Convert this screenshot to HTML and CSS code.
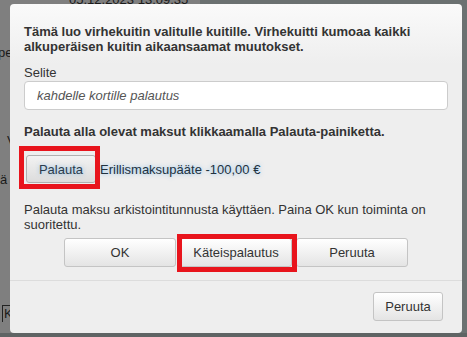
FILE: index.html
```html
<!DOCTYPE html>
<html>
<head>
    <title>Virhekuitti</title>
    <link rel="stylesheet" href="styles.css">
</head>
<body>
    <div class="backdrop">
        <div class="bg-left">
            <div class="bg-date">05.12.2023 13:09:35</div>
            <div class="bg-frag frag-pe">pe</div>
            <div class="bg-frag frag-v">V</div>
            <div class="bg-frag frag-a">ä</div>
            <div class="bg-cell">K</div>
        </div>
        <div class="bg-right"></div>
    </div>

    <div class="modal">
        <div class="modal-body">
            <p class="lead">Tämä luo virhekuitin valitulle kuitille. Virhekuitti kumoaa kaikki alkuperäisen kuitin aikaansaamat muutokset.</p>

            <label for="selite" class="field-label">Selite</label>
            <input type="text" id="selite" class="field-input" placeholder="kahdelle kortille palautus">

            <p class="lead lead-gap">Palauta alla olevat maksut klikkaamalla Palauta-painiketta.</p>

            <div class="refund-row">
                <button class="btn btn-refund marked marked-refund">Palauta</button>
                <span class="refund-text">Erillismaksupääte -100,00 €</span>
            </div>

            <p class="note">Palauta maksu arkistointitunnusta käyttäen. Paina OK kun toiminta on suoritettu.</p>

            <div class="choice-row">
                <button class="btn btn-choice">OK</button>
                <button class="btn btn-choice marked marked-cash">Käteispalautus</button>
                <button class="btn btn-choice">Peruuta</button>
            </div>
        </div>
        <div class="modal-footer">
            <button class="btn btn-footer">Peruuta</button>
        </div>
    </div>
</body>
</html>
```

FILE: styles.css
```css
body {
    margin: 0;
    padding: 0;
    width: 467px;
    height: 337px;
    overflow: hidden;
    font-family: 'Liberation Sans', Arial, sans-serif;
    font-size: 13px;
    color: #333;
    position: relative;
}

/* page behind the overlay */
.backdrop {
    display: grid;
    grid-template-columns: 200px 1fr;
    height: 337px;
    background-color: #5f6464;
}

.bg-left {
    background-color: #7f7f7f;
    height: 333px;
    color: #1a1a1a;
    font-size: 13px;
    line-height: 15px;
}

.bg-right {
    background-color: #6b7171;
    height: 333px;
}

.bg-date {
    margin-top: -8px;
    padding-left: 69px;
}

.bg-frag {
    padding-left: 0;
}

.frag-pe {
    margin-top: 38px;
    margin-left: -2px;
}

.frag-v {
    margin-top: 73px;
    padding-left: 7px;
}

.frag-a {
    margin-top: 24px;
}

.bg-cell {
    margin-top: 118px;
    width: 10px;
    height: 16px;
    border-top: 1px solid #222;
    border-left: 1px solid #222;
    margin-left: 2px;
    padding-left: 1px;
}

/* dialog */
.modal {
    position: absolute;
    left: 10px;
    top: 4px;
    width: 452px;
    height: 329px;
    box-sizing: border-box;
    background: linear-gradient(#fafafa, #eeeeee 60px);
    border-radius: 4px;
    display: flex;
    flex-direction: column;
}

.modal-body {
    padding: 20px 14px 0 14px;
    flex: 1;
}

.lead {
    margin: 0;
    font-weight: bold;
    line-height: 15px;
}

.lead-gap {
    margin-top: 14px;
}

.field-label {
    display: block;
    margin-top: 11px;
    line-height: 16px;
}

.field-input {
    display: block;
    box-sizing: border-box;
    width: 100%;
    height: 29px;
    margin: 0;
    padding: 0 12px;
    font-family: inherit;
    font-size: 13px;
    color: #333;
    background-color: #fff;
    border: 1px solid #ccc;
    border-radius: 4px;
}

.field-input::placeholder {
    font-style: italic;
    color: #555;
}

.btn {
    font-family: inherit;
    font-size: 13px;
    color: #333;
    background: linear-gradient(#ffffff, #e4e4e4);
    border: 1px solid #c4c4c4;
    border-radius: 3px;
    padding: 0;
    cursor: pointer;
}

.refund-row {
    margin-top: 16px;
    display: flex;
    align-items: center;
    padding-left: 2px;
}

.btn-refund {
    width: 70px;
    height: 28px;
    color: #2b3c4c;
    background: linear-gradient(#f2f2f2, #dcdcdc);
    border-color: #b0b0b0;
    text-shadow: 0 0 4px rgba(90, 165, 230, 0.7);
}

.refund-text {
    margin-left: 4px;
    color: #22323f;
    text-shadow: 0 0 4px rgba(90, 165, 230, 0.7);
}

.note {
    margin: 19px 0 0 0;
    line-height: 15px;
}

.choice-row {
    margin-top: 6px;
    display: flex;
    justify-content: center;
    gap: 4px;
}

.btn-choice {
    width: 112px;
    height: 29px;
}

/* red highlight frames */
.marked {
    position: relative;
}

.marked::after {
    content: '';
    position: absolute;
    border: 5px solid #e8141c;
    pointer-events: none;
}

.marked-refund::after {
    left: -8px;
    right: -5px;
    top: -10px;
    bottom: -7px;
}

.marked-cash::after {
    left: -4px;
    right: -6px;
    top: -5px;
    bottom: -6px;
}

.modal-footer {
    border-top: 1px solid #dcdcdc;
    padding: 11px 19px 12px 0;
    display: flex;
    justify-content: flex-end;
}

.btn-footer {
    width: 70px;
    height: 29px;
}
```
